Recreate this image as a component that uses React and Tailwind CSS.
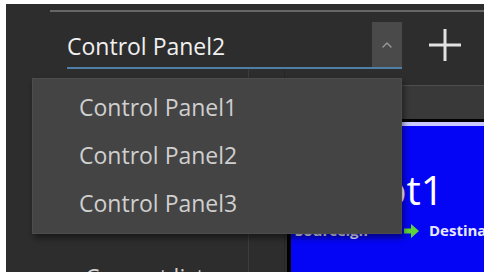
import React from 'react';
import { ChevronUp } from 'lucide-react';

const panels = ['Control Panel1', 'Control Panel2', 'Control Panel3'];

const App = () => {
    return (
        <div className="w-[484px] h-[276px] bg-white pt-[4px] pl-[6px] pb-[4px] overflow-hidden font-['Open_Sans',sans-serif]">
            <div className="relative h-full bg-[#2d2d2d] flex flex-col overflow-hidden">
                <div className="mt-[6px] ml-[44px] h-[2px] bg-[#666666]" />

                {/* selector header */}
                <div className="flex items-center mt-[10px]">
                    <div className="ml-[61px] w-[335px] h-[47px] flex border-b-2 border-[#4f7fa6] shrink-0">
                        <div className="flex-1 flex items-center pt-1 text-[23px] font-medium text-[#f0f0f0] leading-none">
                            Control Panel2
                        </div>
                        <div className="w-[30px] bg-[#4a4a4a] flex items-center justify-center text-[#9a9a9a]">
                            <ChevronUp className="w-4 h-4" strokeWidth={2} />
                        </div>
                    </div>
                    <div className="ml-[26px] -mt-[2px]">
                        <svg width="34" height="34" viewBox="0 0 34 34">
                            <path d="M17 1v32M1 17h32" stroke="#e2e2e2" strokeWidth="3" />
                        </svg>
                    </div>
                </div>

                {/* content below */}
                <div className="flex flex-1 min-h-0">
                    <div className="w-[242px] shrink-0 pt-[197px] pl-[79px] text-[23px] text-[#d0d0d0] whitespace-nowrap leading-none">
                        Current list
                    </div>
                    <div className="w-[37px] shrink-0 border-l border-[#3c3c3c] border-r border-r-[#262626]" />
                    <div className="w-[2px] shrink-0" />
                    <div className="flex-1 min-w-0 flex flex-col pt-[16px]">
                        <div className="h-[34px] bg-[#393939] border-t border-[#4e4e4e]" />
                        <div className="flex-1 border-l-4 border-t-[3px] border-black">
                            <div className="h-full border-t-4 border-[#c9c9ff] bg-[#0505f5] flex flex-col overflow-hidden whitespace-nowrap">
                                <div className="mt-[44px] ml-[45px] text-[40px] leading-none text-white">Shot1</div>
                                <div className="mt-[13px] ml-[4px] flex items-center gap-[10px] text-[15px] font-bold text-[#e8e8ff] leading-none">
                                    <span className="w-[98px] shrink-0">Source.gif</span>
                                    <svg width="16" height="14" viewBox="0 0 16 14" className="shrink-0">
                                        <path d="M1 4.5h7V0l8 7-8 7V9.5H1z" fill="#5fd33a" />
                                    </svg>
                                    <span>Destination</span>
                                </div>
                            </div>
                        </div>
                    </div>
                </div>

                {/* open dropdown */}
                <div className="absolute left-[26px] top-[74px] w-[370px] py-[4px] pb-[6px] bg-[#444444] border border-[#4c4c4c] shadow-[2px_4px_6px_rgba(0,0,0,0.45)]">
                    {panels.map((name) => (
                        <div key={name} className="h-[48px] flex items-center pl-[46px] text-[23px] text-[#cfcfcf] leading-none">
                            {name}
                        </div>
                    ))}
                </div>
            </div>
        </div>
    );
};

export default App;
